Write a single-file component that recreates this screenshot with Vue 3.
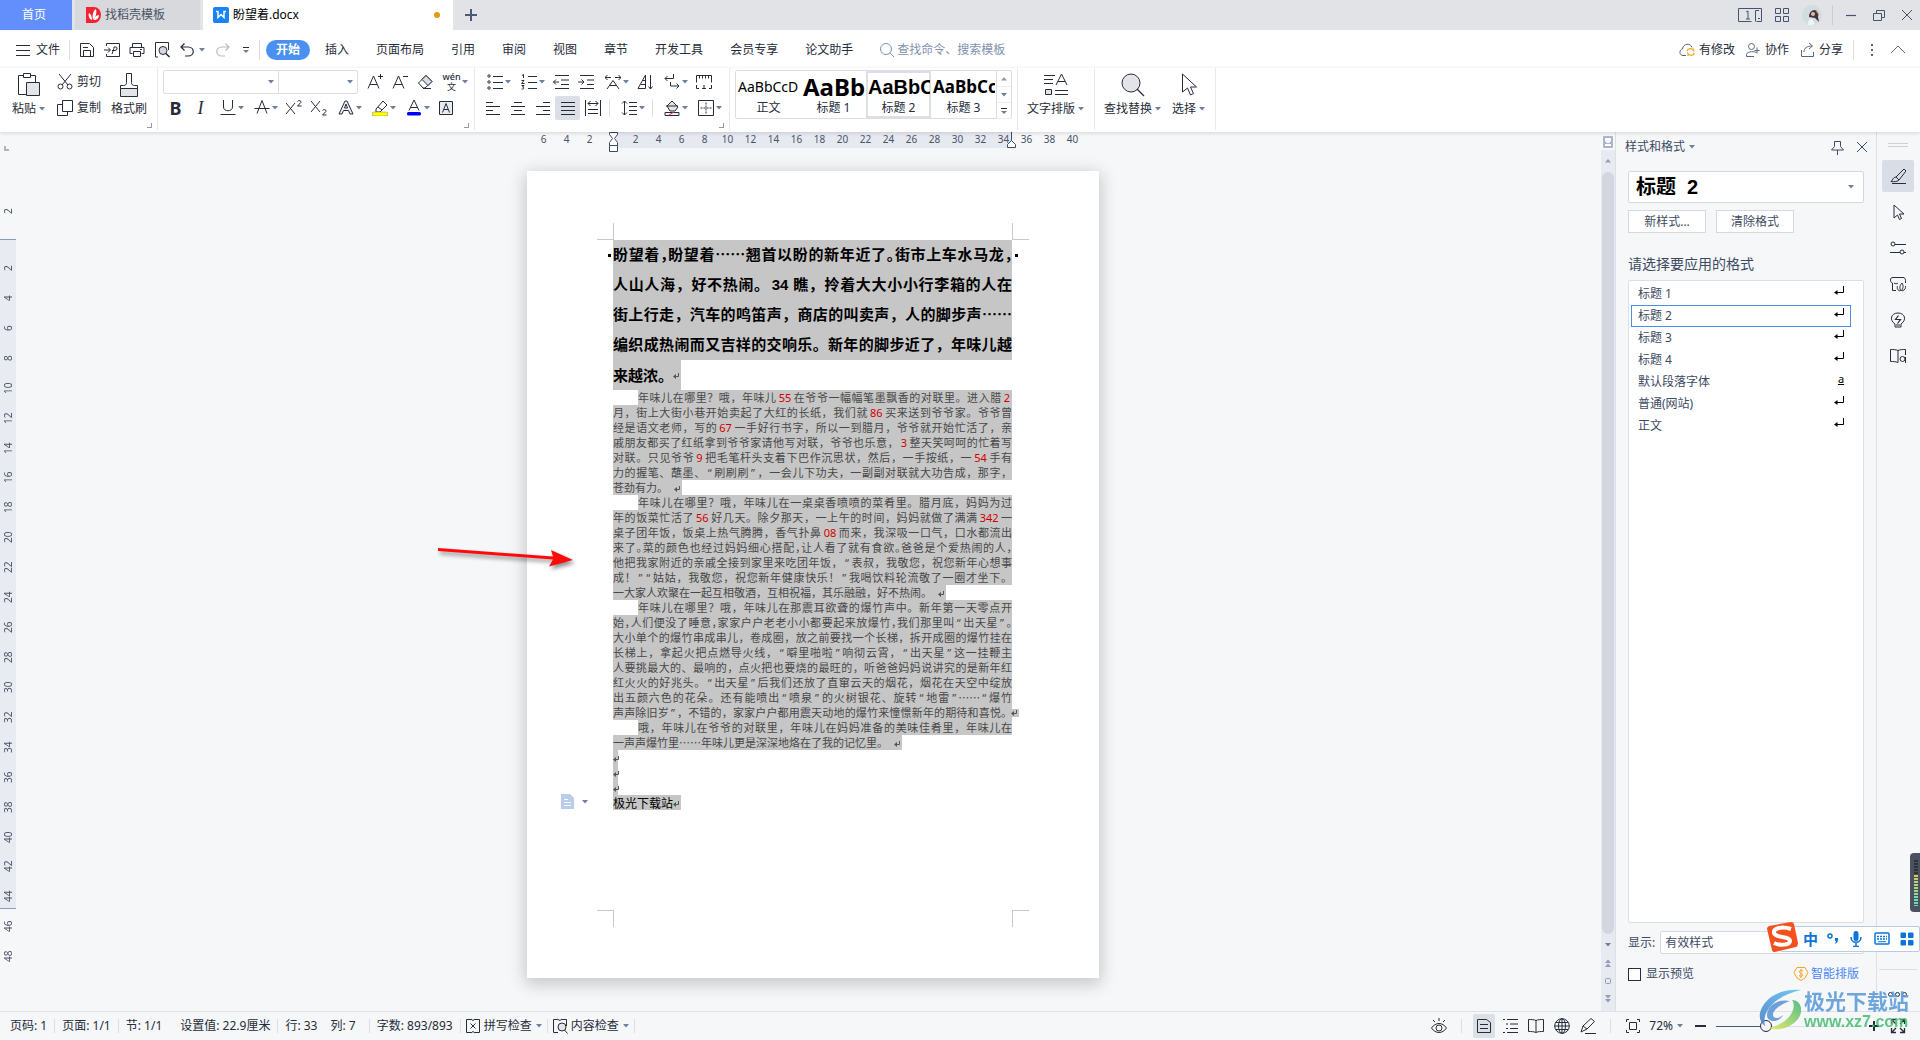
<script setup>
import { h, ref } from 'vue'

const glyphs = {
  caret: '<path d="M1 2h6L4 5.500z" fill="#6d7f9b" stroke="none"/>',
  caretUp: '<path d="M1 5.500h6L4 2z" fill="#8f9cb4" stroke="none"/>',
  more: '<path d="M1 1.500h6" /><path d="M1 4h6L4 7z" fill="#6d7f9b" stroke="none"/>',
  docer: '<path d="M0 0h8a7 8 0 0 1 0 16H0z" fill="#f5222f" stroke="none"/><path d="M7 13C6 8 7 4 10 2c1 4 0 8-3 11zM6 13C3 12 2 9 3 6c2 1 3 4 3 7zM8 13c0-2 2-5 5-5 0 3-2 5-5 5z" fill="#fff" stroke="none"/>',
  writer: '<rect width="16" height="16" rx="2" fill="#1683f8" stroke="none"/><path d="M3 4.500h2v6l3-3 3 3v-6h2" fill="none" stroke="#fff" stroke-width="1.500"/>',
  plus: '<path d="M8 2v12M2 8h12" stroke-width="2" stroke="#4a5a78"/>',
  tabs: '<path d="M13.500 13.500H.5V.5h23v13h-5M21 2.500h-3.500v11M8 4l2-1v8M8 11h4M20 10.500h2" transform="translate(0 1)"/>',
  apps: '<path d="M1.500 1.500h5v5h-5zM9.500 1.500h5v5h-5zM1.500 9.500h5v5h-5zM9.500 9.500h5v5h-5z"/>',
  min: '<path d="M3 8.500h10" stroke-width="1.200"/>',
  restore: '<path d="M2.500 6.500h8v7h-8zM5.500 6V3.500h8v7H11"/>',
  close: '<path d="M3 3l10 10M13 3L3 13"/>',
  menu: '<path d="M1 3.500h14M1 8.500h14M1 13.500h14"/>',
  save: '<path d="M1.500 1.500h9l4 4v9h-13zM4.500 14.500v-6h7v6M4 5.500h5"/>',
  pdf: '<path d="M2.500 4V1.500h13v13h-13V12M0 8h6M4 5.500L6.500 8 4 10.500M8 12c1-3 2-5 2-7h2c1.500 0 1.500 3.500-1 3.500H8"/>',
  print: '<path d="M3.500 5.500v-4h9v4M3.500 11.500h-2.500v-6h14v6h-2.500M4.500 9.500h7v5h-7zM11 7.500h2"/>',
  preview: '<path d="M4 15H1.500V.5h13V8"/><circle cx="9" cy="8.500" r="4" fill="#d5d8de"/><path d="M12 11.500l3.500 3.500" stroke-width="1.500"/>',
  undo: '<path d="M5.500 1.500L2 5l3.500 3.500M2 5h7c7 0 7 9 0 9H6" stroke-width="1.200"/>',
  redo: '<path d="M10.500 1.500L14 5l-3.500 3.500M14 5H7c-7 0-7 9 0 9h3" stroke-width="1.200" stroke="#b7bbc3"/>',
  search: '<circle cx="7" cy="7" r="5.500"/><path d="M11 11l4 4"/>',
  cloud: '<path d="M7 13.500H4c-4 0-4-6-.5-6.500C4 1 12 1 13 5.500"/><path d="M8 9c1-3 5-3 6.500-.5V6.500M15.500 11c-1 3-5 3-6.500.5V14" stroke="#f5a623" stroke-width="1.300"/>',
  collab: '<circle cx="6.500" cy="4.500" r="3"/><path d="M9 14.500H1.500v-2C2 9 11 9 11.500 11M12 5.500v6M9.500 8.500h5"/>',
  share: '<path d="M2.500 8v6.500h12V10M5 10c0-4 3-6 8-6M10 1l3.500 3L10 7"/>',
  dots: '<path d="M8 2v2M8 7v2M8 12v2" stroke-width="2"/>',
  chevron: '<path d="M1 11l7-7 7 7"/>',
  paste: '<path d="M7 2.500H1.500v19H9M13 2.500h5.500V9M6.500.5h7v4h-7z"/><path d="M9.500 9.500h13v13h-13z" fill="#e2e4e8"/>',
  cut: '<path d="M2 0l9 11M14 0L5 11"/><circle cx="3.500" cy="12.500" r="2.500"/><circle cx="12.500" cy="12.500" r="2.500"/>',
  copy: '<path d="M5.500.5h10v11h-10z"/><path d="M5 4.500H.5v11h10V12"/>',
  brush: '<path d="M9.500.5h5v9c0 2 1 3 3 3h3v3h-17v-3h3c2 0 3-1 3-3z"/><path d="M3.500 15.500h17v8h-17z" fill="#e2e4e8"/>',
  grow: '<path d="M1 14.500L6.500 2 12 14.500M3 10.500h7M13.500 0v5M11 2.500h5"/>',
  shrink: '<path d="M1 14.500L6.500 2 12 14.500M3 10.500h7M11 2.500h5"/>',
  eraser: '<path d="M1.500 9L9 1.500l6 6L8 14H6z"/><path d="M5 5.500l6 6 4-4-6-6z" fill="#d9dce1"/><path d="M6 14.500h8"/>',
  under: '<path d="M3.500 0v7c0 5 9 5 9 0V0M.5 14.500h15"/>',
  strike: '<path d="M3 13.500L8 .5l5 13M.5 8.500h15"/>',
  sup: '<path d="M0 3l9 11M9 3L0 14M11.500 1.500c1-1.500 4-1 3.500.8L11.500 6h4"/>',
  sub: '<path d="M0 1l9 11M9 1L0 12M11.500 10.500c1-1.500 4-1 3.500.8L11.500 15h4"/>',
  effect: '<path d="M1 14L7 1h2l6 13h-3l-1.500-3.500h-5L4 14zM6.500 8h3L8 4z" fill="#eceef1"/>',
  marker: '<path d="M4 9L11 1l4 4-7 7H4zM6 7l4 3"/><rect x="0" y="12" width="16" height="4" rx="2" fill="#ff0" stroke="#777" stroke-width=".5"/>',
  color: '<path d="M3 10.500L8 0l5 10.500M4.500 7.500h7"/><rect x="1" y="12" width="14" height="3.500" rx="1.500" fill="#00f" stroke="none"/>',
  shade: '<path d="M1.500 1.500h13v13h-13z" fill="#e8eaed"/><path d="M4.500 12.500L8 3.500l3.500 9M6 9.500h4"/>',
  bullets: '<circle cx="2" cy="2" r="1.200"/><circle cx="2" cy="8" r="1.200"/><circle cx="2" cy="14" r="1.200"/><path d="M6 2.500h10M6 8.500h10M6 14.500h10"/>',
  numbers: '<path d="M1 1.500L2.500.5V4M.5 6.500h2.500L.5 9.500h3M.5 11.500h2.500L1.500 13c2 0 2 2.500-1 2M7 2.500h9M7 8.500h9M7 14.500h9"/>',
  outdent: '<path d="M2 1.500h14M8 6h8M8 10.500h8M2 14.500h14M6 8H.5M3 5.500L.5 8 3 10.500"/>',
  indent: '<path d="M2 1.500h14M9 6h7M9 10.500h7M2 14.500h14M0 8h6M3.500 5.500L6 8l-2.500 2.500"/>',
  textdir: '<path d="M0 3.500h6M2.500 1L0 3.500 2.500 6M10 3.500h6M13.500 1L16 3.500 13.500 6M2 15l6-8.500 6 8.500M5 11.500h6"/>',
  sort: '<path d="M1 14.500L8.500 1v13.500zM4 10.500h4.500M6 6.500h2.500M13.500 1v14M11.500 12.500l2 2.500 2-2.500"/>',
  wrap: '<path d="M9.500 0v4.500H1M3.500 2L1 4.500 3.500 7M6.500 8v4H15M12.500 9.500L15 12l-2.500 2.500"/>',
  ruler: '<path d="M.5 8.500v-7h15v7M3.500 1.500v3M6.500 1.500v3M9.500 1.500v3M12.500 1.500v3M.5 11v3.500H3M6 14.500h4M8 11v3.500M13 14.500h2.500V11"/>',
  left: '<path d="M1 2.500h7M1 6.500h14M1 10.500h7M1 14.500h14"/>',
  center: '<path d="M4 2.500h8M1 6.500h14M4 10.500h8M1 14.500h14"/>',
  right: '<path d="M8 2.500h7M1 6.500h14M8 10.500h7M1 14.500h14"/>',
  justify: '<path d="M1 2.500h14M1 6.500h14M1 10.500h14M1 14.500h14"/>',
  distribute: '<path d="M.5 0v16M15.500 0v16M3 3.500h10M5.500 1L3 3.500 5.500 6M10.500 1L13 3.500 10.500 6M3 9.500h10M3 13.500h10"/>',
  spacing: '<path d="M3.500 1v14M1 3.500L3.500 1 6 3.500M1 12.500L3.500 15 6 12.500M8 2.500h8M8 6.500h8M8 10.500h8M8 14.500h8"/>',
  fill: '<path d="M3 6l5-5 6 6-3 4H6z" fill="#e2e4e8"/><path d="M2 6h12"/><path d="M1 12.500h14v3H1z" fill="#eef"/><path d="M5 15l5-3" stroke="#e33"/>',
  border: '<path d="M.5.500h15v15H.5z"/><path d="M8 2.500v11M2.500 8h11" stroke-dasharray="2 1"/>',
  layout: '<path d="M0 2.500h11M0 6.500h9M0 10.500h9M12 12L17.500 1 23 12M14 8.500h7M11 17.500h13M11 21.500h13"/><path d="M1.500 16.500h6v5h-6z" fill="#e2e4e8"/>',
  find: '<circle cx="10" cy="10" r="9" fill="#e2e4e8"/><path d="M16 16l7 7" stroke-width="1.300"/>',
  pointer: '<path d="M5.500 1v18l5-4 3 7 3-1.500-3-6.500h6z"/>',
  pin: '<path d="M5.500 2.500h6v5l3 3.500h-12l3-3.500zM8.500 11v5"/>',
  enter: '<path d="M10.500 1v6.500H3" stroke="#000"/><path d="M1 7.500L4.500 5v5z" fill="#000" stroke="none"/>',
  style: '<path d="M6 9L14 1l2 2-7 9zM6 9c-3 0-3 3-5 4.500 3 .5 7 0 8-1.500M2 15.500h14"/>',
  arrow: '<path d="M4 1v13l3.500-3 2 4.500 2-1-2-4.500H14z"/>',
  sliders: '<circle cx="3" cy="4" r="2"/><path d="M5 4.500h11M0 12.500h10"/><circle cx="12" cy="12" r="2"/><path d="M14 12.500h2"/>',
  shop: '<path d="M2.500 14.500V7C1 7 .5 5 .5 4c0-2 1-2.500 2.500-2.500h10c1.500 0 2.500 1 2.500 3V7M2.500 14.500H6M4 7c1.500 1 3 1 4 0"/><path d="M11 15c-2-3-1-6 1-8 2 3 1 6-1 8zM10 15c-3-1-3-3-2.500-5M12 15c3-1 4-3 3.500-5"/>',
  bulb: '<path d="M5 12C-1 8 1 1 8 1s9 7 3 11v3H5zM6 13h4"/><path d="M8.500 3.500l-3 4h5l-3 4" stroke-width="1.200"/>',
  book: '<path d="M8 2.500C6 1.500 3 1.500.5 1.500v12c3 0 5 0 7.500 1M8 2.500c2-1 5-1 7.500-1V7M8 2.500v12"/><circle cx="12.500" cy="11" r="2.500"/><path d="M15.500 9v6"/>',
  spell: '<path d="M6 1.500H1.500v13H6M10 1.500h4.500v13H10M6 1l2 1.500L10 1M6 15l2-1.500 2 1.500M5.500 5.500l5 5M10.500 5.500l-5 5"/>',
  check: '<path d="M5 1.500H1.500v13H6M10 1.500h4.500V8M5 1l3 1.500L10 1"/><circle cx="10" cy="9" r="4" fill="#e2e4e8"/><path d="M12.500 12l3 3.500"/>',
  eye: '<path d="M.5 10c4-6 11-6 15 0-4 6-11 6-15 0zM8 0v3M2 2l2 2M14 2l-2 2"/><circle cx="8" cy="10" r="3"/>',
  pageview: '<path d="M1.500 1.500h9l4 3v10h-13zM4 6.500h8M4 10.500h8"/>',
  outline: '<path d="M1 1.500h2M5 1.500h11M4 6h2M8 6h8M4 10.500h2M8 10.500h8M1 14.500h2M5 14.500h11"/>',
  read: '<path d="M8 2.500C6 1.500 3 1.500.5 1.500v12c3 0 5 0 7.500 1 2-1 4.500-1 7.500-1v-12c-2.500 0-5.500 0-7.500 1v12"/>',
  globe: '<circle cx="8" cy="8" r="7.300"/><path d="M8 .5v15M.5 8h15M2 4.500h12M2 11.500h12"/><ellipse cx="8" cy="8" rx="3.500" ry="7.300"/>',
  pen: '<path d="M1 14l2-6L11 .5l3.500 3L7 11zM3 8l4 3M5 15.500h11"/>',
  fit: '<path d="M4 1.500H1.500V4M12 1.500h2.500V4M4 14.500H1.500V12M12 14.500h2.500V12M4.500 4.500h7v7h-7z"/>',
  full: '<path d="M1.500 6V1.500H6M10 1.500h4.500V6M1.500 10v4.500H6M10 14.500h4.500V10M2 2l4 4M14 2l-4 4M2 14l4-4M14 14l-4-4" stroke-width="1.300"/>',
  dblUp: '<path d="M1 4L4 .5 7 4zM1 8l3-3.500L7 8z" fill="#8f9cb4" stroke="none"/>',
  dblDown: '<path d="M1 0h6L4 3.500zM1 4h6L4 7.500z" fill="#8f9cb4" stroke="none"/>',
  square: '<rect x="1.500" y="1.500" width="5" height="5" rx="1" stroke="#8f9cb4"/>',
  coin: '<path d="M4 1.500h8l3 5L12 12l-4 2.500L4 12 1 6.500z" stroke="#f5a623"/><path d="M10 5C7 3 4.500 6.500 8 7.500s1.500 4-2 2M8 3v9" stroke="#f5a623"/>',
  note: '<path d="M0 0h9l4 4v11H0z" fill="#b9cce9" stroke="none"/><path d="M3 5.500h4M3 8.500h7M3 11.500h7" stroke="#fff"/>',
  ret: '<path d="M5.500 1v3.500h-3" stroke="#555"/><path d="M0 4.500L3 2v5z" fill="#555" stroke="none"/>',
  mic: '<rect x="5.500" y="0" width="5" height="10" rx="2.500" fill="#0b74d8" stroke="none"/><path d="M3 6c0 7 10 7 10 0M8 11v4M5 15.500h6" stroke="#0b74d8" stroke-width="1.500"/>',
  keyboard: '<rect x="1" y="2" width="14" height="11" rx="1" stroke="#0b74d8" stroke-width="1.500"/><path d="M3 5.500h10M3 8h10" stroke="#0b74d8" stroke-dasharray="2 1" stroke-width="1.500"/><path d="M4 10.700h8" stroke="#0b74d8"/>',
  tiles: '<path d="M2 2h4.500v4.500H2zM9.500 9.500H14V14H9.500zM2 9.500h4.500V14H2zM9.500 2H14v4.500H9.500z" fill="#0b74d8" stroke="#0b74d8" stroke-linejoin="round"/>'
}

const Icon = (p) => h('svg', {
  width: p.s || 16,
  height: p.t || p.s || 16,
  viewBox: `0 0 ${p.s || 16} ${p.t || p.s || 16}`,
  fill: 'none',
  stroke: 'currentColor',
  'aria-hidden': 'true',
  innerHTML: glyphs[p.n]
})
Icon.props = ['n', 's', 't']

const menus = ['插入', '页面布局', '引用', '审阅', '视图', '章节', '开发工具', '会员专享', '论文助手']
const paraTop = [['bullets', 1], ['numbers', 1], ['outdent'], ['indent'], ['textdir', 1], ['sort'], ['wrap', 1], ['ruler']]
const aligns = ['left', 'center', 'right', 'justify', 'distribute']
const fontRow = [['under', 1], ['strike', 1], ['sup'], ['sub'], ['effect', 1], ['marker', 1], ['color', 1], ['shade']]
const gallery = [
  { text: 'AaBbCcD', name: '正文', kind: 'g0' },
  { text: 'AaBb', name: '标题 1', kind: 'g1' },
  { text: 'AaBbC', name: '标题 2', kind: 'g2' },
  { text: 'AaBbCc', name: '标题 3', kind: 'g3' }
]
const hRuler = [6, 4, 2, '', ...Array.from({ length: 20 }, (_, i) => (i + 1) * 2)]
const vRuler = Array.from({ length: 24 }, (_, i) => (i + 1) * 2)

const heading = [
  '盼望着，盼望着……翘首以盼的新年近了。街市上车水马龙，',
  '人山人海，好不热闹。34瞧，拎着大大小小行李箱的人在',
  '街上行走，汽车的鸣笛声，商店的叫卖声，人的脚步声……',
  '编织成热闹而又吉祥的交响乐。新年的脚步近了，年味儿越',
  '来越浓。'
]
const paragraphs = [
  [
    '年味儿在哪里？哦，年味儿55在爷爷一幅幅笔墨飘香的对联里。进入腊2',
    '月，街上大街小巷开始卖起了大红的长纸，我们就86买来送到爷爷家。爷爷曾',
    '经是语文老师，写的67一手好行书字，所以一到腊月，爷爷就开始忙活了，亲',
    '戚朋友都买了红纸拿到爷爷家请他写对联，爷爷也乐意，3整天笑呵呵的忙着写',
    '对联。只见爷爷9把毛笔杆头支着下巴作沉思状，然后，一手按纸，一54手有',
    '力的握笔、蘸墨、“刷刷刷”，一会儿下功夫，一副副对联就大功告成，那字，',
    '苍劲有力。'
  ],
  [
    '年味儿在哪里？哦，年味儿在一桌桌香喷喷的菜肴里。腊月底，妈妈为过',
    '年的饭菜忙活了56好几天。除夕那天，一上午的时间，妈妈就做了满满342一',
    '桌子团年饭，饭桌上热气腾腾，香气扑鼻08而来，我深吸一口气，口水都流出',
    '来了。菜的颜色也经过妈妈细心搭配，让人看了就有食欲。爸爸是个爱热闹的人，',
    '他把我家附近的亲戚全接到家里来吃团年饭，“表叔，我敬您，祝您新年心想事',
    '成！”“姑姑，我敬您，祝您新年健康快乐！”我喝饮料轮流敬了一圈才坐下。',
    '一大家人欢聚在一起互相敬酒，互相祝福，其乐融融，好不热闹。'
  ],
  [
    '年味儿在哪里？哦，年味儿在那震耳欲聋的爆竹声中。新年第一天零点开',
    '始，人们便没了睡意，家家户户老老小小都要起来放爆竹，我们那里叫“出天星”。',
    '大小单个的爆竹串成串儿，卷成圈，放之前要找一个长梯，拆开成圈的爆竹挂在',
    '长梯上，拿起火把点燃导火线，“噼里啪啦”响彻云霄，“出天星”这一挂鞭主',
    '人要挑最大的、最响的，点火把也要烧的最旺的，听爸爸妈妈说讲究的是新年红',
    '红火火的好兆头。“出天星”后我们还放了直窜云天的烟花，烟花在天空中绽放',
    '出五颜六色的花朵。还有能喷出“喷泉”的火树银花、旋转“地雷”……“爆竹',
    '声声除旧岁”，不错的，家家户户都用震天动地的爆竹来憧憬新年的期待和喜悦。'
  ],
  [
    '哦，年味儿在爷爷的对联里，年味儿在妈妈准备的美味佳肴里，年味儿在',
    '一声声爆竹里……年味儿更是深深地烙在了我的记忆里。'
  ]
]
const tightLines = /^(盼望着|来了。|始，)/
const split = (line) => line.split(/(\d+|[“”]|[，。])/).filter(Boolean).map((t) => ({
  t,
  c: /^\d/.test(t) ? 'num' : /[“”]/.test(t) ? 'quote' : /[，。]/.test(t) && tightLines.test(line) ? 'half' : ''
}))
const isShort = (lines, i) => i === lines.length - 1 && lines[i].length < 34

const styles = ['标题 1', '标题 2', '标题 3', '标题 4', '默认段落字体', '普通(网站)', '正文']
const current = ref('标题 2')
const zoom = ref(34)
const side = ['style', 'arrow', 'sliders', 'shop', 'bulb', 'book']
</script>

<template>
  <div class="app">
    <header class="titlebar">
      <button class="tab home">首页</button>
      <button class="tab docer"><Icon n="docer" />找稻壳模板</button>
      <button class="tab doc"><Icon n="writer" /><span>盼望着.docx</span><i class="unsaved"></i></button>
      <button class="add" aria-label="新建"><Icon n="plus" /></button>
      <div class="window">
        <button aria-label="标签"><Icon n="tabs" s="24" t="16" /></button>
        <button aria-label="应用"><Icon n="apps" /></button>
        <svg class="avatar" width="20" height="20" viewBox="0 0 20 20">
          <circle cx="10" cy="10" r="10" fill="#d3dde1" />
          <path d="M7 12c0-4 2-7 6-7 3 0 4 4 3 7l1 5-4-4z" fill="#403441" />
          <circle cx="11" cy="9" r="2" fill="#e6b7a9" />
          <path d="M6 20c0-5 2-7 4-6l3 5-3 1z" fill="#eef6f7" />
          <path d="M13 5l3 1v3z" fill="#d7ad5c" />
        </svg>
        <i class="bar"></i>
        <button aria-label="最小化"><Icon n="min" /></button>
        <button aria-label="还原"><Icon n="restore" /></button>
        <button aria-label="关闭"><Icon n="close" /></button>
      </div>
    </header>

    <nav class="menubar">
      <button class="file"><Icon n="menu" />文件</button>
      <i class="bar"></i>
      <div class="quick">
        <button aria-label="保存"><Icon n="save" /></button>
        <button aria-label="输出PDF"><Icon n="pdf" /></button>
        <button aria-label="打印"><Icon n="print" /></button>
        <button aria-label="预览"><Icon n="preview" /></button>
        <button class="wide" aria-label="撤销"><Icon n="undo" /><Icon n="caret" s="8" /></button>
        <button aria-label="恢复"><Icon n="redo" /></button>
      </div>
      <button class="qmore" aria-label="更多"><Icon n="more" s="8" /></button>
      <i class="bar"></i>
      <button class="pill">开始</button>
      <div class="menus"><button v-for="m in menus" :key="m">{{ m }}</button></div>
      <label class="find"><Icon n="search" /><input type="text" placeholder="查找命令、搜索模板" /></label>
      <div class="right">
        <button><Icon n="cloud" />有修改</button>
        <button><Icon n="collab" />协作</button>
        <button><Icon n="share" />分享</button>
        <i class="bar"></i>
        <button aria-label="选项"><Icon n="dots" /></button>
        <button aria-label="收起"><Icon n="chevron" /></button>
      </div>
    </nav>

    <section class="ribbon">
      <div class="group clip">
        <button class="big narrow"><Icon n="paste" s="24" /><span>粘贴<Icon n="caret" s="8" /></span></button>
        <div class="rows">
          <button class="row pair"><Icon n="cut" />剪切</button>
          <button class="row pair"><Icon n="copy" />复制</button>
        </div>
        <button class="big narrow"><Icon n="brush" s="24" /><span>格式刷</span></button>
        <i class="corner"></i>
      </div>
      <div class="group font">
        <div class="rows">
          <div class="row">
            <div class="combo">
              <div class="face"><select aria-label="字体"><option></option></select><Icon n="caret" s="8" /></div>
              <div class="size"><select aria-label="字号"><option></option></select><Icon n="caret" s="8" /></div>
            </div>
            <button class="tool" aria-label="增大字号"><Icon n="grow" /></button>
            <button class="tool" aria-label="减小字号"><Icon n="shrink" /></button>
            <button class="tool" aria-label="清除格式"><Icon n="eraser" /></button>
            <button class="tool drop"><span class="pinyin"><b>wén</b><em>文</em></span><Icon n="caret" s="8" /></button>
          </div>
          <div class="row">
            <button class="tool bold">B</button>
            <button class="tool ital">I</button>
            <button v-for="[n, d] in fontRow" :key="n" class="tool" :class="{ drop: d }" :aria-label="n"><Icon :n="n" /><Icon v-if="d" n="caret" s="8" /></button>
          </div>
        </div>
        <i class="corner"></i>
      </div>
      <div class="group para">
        <div class="rows">
          <div class="row">
            <button v-for="[n, d] in paraTop" :key="n" class="tool" :class="{ drop: d }" :aria-label="n"><Icon :n="n" /><Icon v-if="d" n="caret" s="8" /></button>
          </div>
          <div class="row">
            <button v-for="n in aligns" :key="n" class="tool" :class="{ on: n === 'justify' }" :aria-label="n"><Icon :n="n" /></button>
            <i class="bar"></i>
            <button class="tool drop" aria-label="行距"><Icon n="spacing" /><Icon n="caret" s="8" /></button>
            <i class="bar"></i>
            <button class="tool drop" aria-label="底纹"><Icon n="fill" /><Icon n="caret" s="8" /></button>
            <button class="tool drop" aria-label="边框"><Icon n="border" /><Icon n="caret" s="8" /></button>
          </div>
        </div>
        <i class="corner"></i>
      </div>
      <div class="group gal">
        <div class="gallery">
          <button v-for="g in gallery" :key="g.name" class="card" :class="[g.kind, { picked: g.name === current }]">
            <b>{{ g.text }}</b><span>{{ g.name }}</span>
          </button>
          <div class="spin">
            <button aria-label="上"><Icon n="caretUp" s="8" /></button>
            <button aria-label="下"><Icon n="caret" s="8" /></button>
            <button aria-label="全部"><Icon n="more" s="8" /></button>
          </div>
        </div>
      </div>
      <div class="group wideg"><button class="big"><Icon n="layout" s="24" /><span>文字排版<Icon n="caret" s="8" /></span></button></div>
      <div class="group wideg">
        <button class="big"><Icon n="find" s="24" /><span>查找替换<Icon n="caret" s="8" /></span></button>
        <button class="big"><Icon n="pointer" s="24" /><span>选择<Icon n="caret" s="8" /></span></button>
      </div>
    </section>

    <main class="work">
      <div class="vruler">
        <i class="ell"></i>
        <span class="before">2</span>
        <div class="vnums"><span v-for="n in vRuler" :key="n">{{ n }}</span></div>
      </div>
      <div class="stage">
        <div class="hruler">
          <span v-for="(n, i) in hRuler" :key="i">{{ n }}</span>
          <svg class="first" width="10" height="22" viewBox="0 0 10 22" fill="#fff" stroke="#3d4a66"><path d="M.5.500h8v2l-3 4 3 4v3h-8v-3l3-4-3-4zM.5 13.500h8v6h-8z" /></svg>
          <svg class="last" width="10" height="16" viewBox="0 0 10 16" fill="#fff" stroke="#3d4a66"><path d="M4.500 0v9M.5 15.500v-3l4-4 4 4v3z" /></svg>
        </div>
        <article class="page">
          <div class="crops top"><i></i><i></i></div>
          <div class="text">
            <h2>
              <span v-for="(l, i) in heading" :key="i" class="line" :class="{ short: i === 4 }"><span v-for="(s, k) in split(l)" :key="k" :class="s.c">{{ s.t }}</span><Icon v-if="i === 4" n="ret" s="8" /></span>
            </h2>
            <p v-for="(p, j) in paragraphs" :key="j">
              <span v-for="(l, i) in p" :key="i" class="line" :class="{ short: isShort(p, i), lead: i === 0 }"><span v-for="(s, k) in split(l)" :key="k" :class="s.c">{{ s.t }}</span><Icon v-if="i === p.length - 1" n="ret" s="8" :class="{ hang: !isShort(p, i) }" /></span>
            </p>
            <p v-for="n in 3" :key="'e' + n"><span class="line short blank"><Icon n="ret" s="8" /></span></p>
            <p class="sign"><span class="line short">极光下载站<Icon n="ret" s="8" /></span>
              <button class="note" aria-label="粘贴选项"><Icon n="note" /><Icon n="caret" s="8" /></button>
            </p>
          </div>
          <div class="crops bottom"><i></i><i></i></div>
          <svg class="pointer" width="150" height="40" viewBox="0 0 150 40">
            <path d="M8 7L123 15.500 121 9 143 19 119 25.500 123 18.500 8 10z" fill="#fe0a0a" />
          </svg>
        </article>
      </div>
      <div class="scroll">
        <svg width="10" height="12" viewBox="0 0 10 12"><rect width="10" height="12" rx="1" fill="#aab4cc" /><path d="M2 2h6v3l-2 2H4L2 5zM2 8h6v2H2z" fill="#fff" /></svg>
        <div class="track">
          <button class="up" aria-label="上滚"><Icon n="caretUp" s="8" /></button>
          <i class="thumb"></i>
          <button aria-label="下滚"><Icon n="caret" s="8" /></button>
          <button aria-label="上一页"><Icon n="dblUp" s="8" /></button>
          <button aria-label="对象"><Icon n="square" s="8" /></button>
          <button aria-label="下一页"><Icon n="dblDown" s="8" /></button>
        </div>
      </div>
      <aside class="panel">
        <div class="phead"><span>样式和格式</span><Icon n="caret" s="8" /><button class="pin" aria-label="固定"><Icon n="pin" /></button><button aria-label="关闭窗格"><Icon n="close" /></button></div>
        <div class="pick big2"><select v-model="current" aria-label="当前样式"><option v-for="s in styles" :key="s" :value="s">{{ s.replace(' ', '\u00a0\u00a0') }}</option></select><Icon n="caret" s="8" /></div>
        <div class="btns"><button>新样式...</button><button>清除格式</button></div>
        <h3>请选择要应用的格式</h3>
        <div class="list">
          <button v-for="s in styles" :key="s" :class="{ picked: s === current }" @click="current = s">
            <span>{{ s }}</span><u v-if="s === '默认段落字体'">a</u><Icon v-else n="enter" s="12" />
          </button>
        </div>
        <div class="show"><label for="show">显示:</label><div class="pick"><select id="show"><option>有效样式</option></select></div></div>
        <div class="opts"><input id="pv" type="checkbox" /><label for="pv">显示预览</label><a href="#"><Icon n="coin" />智能排版</a></div>
      </aside>
      <aside class="side">
        <i class="grip"></i>
        <button v-for="(n, i) in side" :key="n" :class="{ on: i === 0 }" :aria-label="n"><Icon :n="n" /></button>
        <div class="rest"><i></i><i></i><i></i></div>
      </aside>
    </main>

    <footer class="status">
      <span>页码: 1</span><i class="bar"></i><span>页面: 1/1</span><i class="bar"></i><span>节: 1/1</span><span class="gap">设置值: 22.9厘米</span><i class="bar"></i><span>行: 33</span><span class="col">列: 7</span><i class="bar"></i><span>字数: 893/893</span><i class="bar"></i>
      <button><Icon n="spell" />拼写检查<Icon n="caret" s="8" /></button><i class="bar"></i>
      <button><Icon n="check" />内容检查<Icon n="caret" s="8" /></button><i class="bar"></i>
      <div class="views">
        <button aria-label="护眼"><Icon n="eye" /></button>
        <i class="bar"></i>
        <button class="on" aria-label="页面视图"><Icon n="pageview" /></button>
        <button aria-label="大纲"><Icon n="outline" /></button>
        <button aria-label="阅读"><Icon n="read" /></button>
        <button aria-label="Web"><Icon n="globe" /></button>
        <button aria-label="写作"><Icon n="pen" /></button>
        <i class="bar"></i>
      </div>
      <div class="zoomer">
        <Icon n="fit" /><span class="pct">72%<Icon n="caret" s="8" /></span>
        <button class="minus" aria-label="缩小"><i></i></button>
        <input v-model="zoom" type="range" min="0" max="100" aria-label="缩放" />
        <button class="plusb" aria-label="放大"><i></i></button>
        <button aria-label="全屏"><Icon n="full" /></button>
      </div>
    </footer>

    <div class="meter"><i></i></div>

    <div class="brand">
      <svg width="44" height="42" viewBox="0 0 44 42">
        <defs>
          <linearGradient id="bl" x1="0" y1="1" x2="1" y2="0"><stop offset="0" stop-color="#4a7fc6" /><stop offset="1" stop-color="#5cc4f3" /></linearGradient>
          <linearGradient id="gr" x1="0" y1="1" x2="1" y2="0"><stop offset="0" stop-color="#e6e85a" /><stop offset="1" stop-color="#3fb878" /></linearGradient>
        </defs>
        <path d="M42 1C20-1 4 10 1 24c-1 6 1 10 5 13C2 22 18 6 42 1z" fill="url(#bl)" />
        <path d="M10 39c14 5 34-6 32-20-1-5-4-8-9-8 6 9-4 24-23 28z" fill="url(#gr)" />
        <path d="M31 12C18 9 8 18 8 26c0 8 12 8 16 0-4 4-10 4-10 0 0-5 8-11 17-14z" fill="#5b95d6" />
      </svg>
      <div><strong>极光下载站</strong><em>www.xz7.com</em></div>
    </div>

    <div class="ime">
      <svg class="sogou" width="32" height="32" viewBox="0 0 32 32">
        <path d="M3 5L25 1q2 0 3 2l4 19q0 3-2 4L9 31q-3 0-3-2L1 8q0-2 2-3z" fill="#f4511e" />
        <path d="M25 8C16 5 7 7 8 12s16 3 16 8c0 4-10 5-16 2" fill="none" stroke="#fff" stroke-width="4" />
      </svg>
      <b>中</b>
      <svg width="12" height="14" viewBox="0 0 12 14"><circle cx="3" cy="4" r="2" fill="none" stroke="#0b74d8" stroke-width="1.500" /><path d="M8 6h3c0 4-1 5-3 6l1-3H8z" fill="#0b74d8" /></svg>
      <Icon n="mic" /><Icon n="keyboard" /><Icon n="tiles" />
    </div>
  </div>
</template>

<style>
html, body { background: #f5f7f9; }
</style>

<style scoped>
.app { position: relative; display: flex; flex-direction: column; min-height: 100vh; font: 12px/16px "Noto Sans", "Noto Sans CJK SC", sans-serif; color: #262c3a; background: #f5f7f9; overflow: hidden; }
.app * { box-sizing: border-box; }
button, select, input { font: inherit; color: inherit; }
button { display: flex; align-items: center; justify-content: center; border: 0; padding: 0; margin: 0; background: none; white-space: nowrap; }
svg { display: block; flex: none; }
select { appearance: none; border: 0; background: none; outline: 0; padding: 0; min-width: 0; flex: 1; }
.bar { flex: none; width: 1px; height: 20px; background: #dcdfe4; }

.titlebar { display: flex; height: 30px; background: #e1e3e7; flex: none; }
.home { width: 72px; margin-right: 3px; padding-right: 4px; background: #628ffb; color: #fff; }
.docer { width: 125px; margin-right: 3px; padding-left: 11px; gap: 3px; justify-content: flex-start; background: #d7d9dc; color: #4a5264; }
.doc { width: 250px; padding: 0 13px 0 10px; gap: 4px; background: #fff; color: #000; }
.doc span { flex: 1; text-align: left; }
.unsaved { width: 6px; height: 6px; border-radius: 3px; background: #e59a0a; }
.add { width: 36px; }
.window { display: flex; align-items: center; margin-left: auto; padding-right: 5px; gap: 12px; color: #44546f; }
.window .bar { margin: 0 -2px; background: #c9ccd2; }

.menubar { display: flex; align-items: center; height: 38px; padding-top: 1px; background: #fff; flex: none; }
.file { gap: 5px; margin: 0 9px 0 15px; }
.quick { display: flex; gap: 9px; padding: 0 5px 0 9px; }
.quick .wide { gap: 3px; }
.qmore { width: 20px; margin-right: 3px; }
.pill { width: 44px; height: 20px; margin: 0 15px 0 6px; border-radius: 10px; background: #4a90f0; color: #fff; font-weight: 700; }
.menus { display: flex; gap: 27px; }
.find { display: flex; align-items: center; gap: 2px; margin-left: 26px; color: #8391ad; }
.find input { width: 120px; border: 0; padding: 0; outline: 0; background: none; }
.find input::placeholder { color: #8391ad; opacity: 1; }
.right { display: flex; align-items: center; gap: 10px; margin-left: auto; padding-right: 14px; }
.right button { gap: 4px; }
.right button svg { color: #5b6579; }

.ribbon { position: relative; z-index: 2; display: flex; height: 64px; background: #fff; box-shadow: 0 1px 4px rgba(0, 0, 0, .14); flex: none; }
.group { position: relative; display: flex; height: 62px; padding: 1px 5px 0; border-right: 1px solid #e8eaed; flex: none; }
.clip { gap: 6px; padding: 1px 9px 0 10px; }
.font { padding-right: 3px; }
.para { padding-right: 4px; }
.corner { position: absolute; right: 5px; bottom: 2px; width: 5px; height: 5px; border: solid #8f9cb4; border-width: 0 1px 1px 0; }
.big { flex-direction: column; justify-content: flex-start; gap: 2px; padding-top: 4px; height: 52px; }
.big span { display: flex; align-items: center; gap: 2px; height: 20px; }
.narrow { width: 38px; }
.rows { display: flex; flex-direction: column; }
.row { display: flex; align-items: center; height: 26px; }
.pair { gap: 4px; width: 50px; }
.combo { display: flex; width: 195px; height: 24px; margin-right: 4px; border: 1px solid #dcdee2; border-radius: 2px; }
.combo div { display: flex; align-items: center; padding-right: 3px; }
.face { width: 115px; border-right: 1px solid #dcdee2; }
.size { flex: 1; }
.tool { width: 25px; height: 24px; }
.drop { width: 34px; gap: 1px; padding-left: 4px; }
.bold { font: 700 18px/20px "Noto Sans", sans-serif; }
.ital { font: italic 18px/20px "Liberation Serif", serif; }
.on { background: #dbe0e7; border-radius: 2px; }
.pinyin { display: flex; flex-direction: column; align-items: center; width: 17px; }
.pinyin b { font: 500 9px/10px "Noto Sans", sans-serif; }
.pinyin em { font: 9px/10px "Noto Sans CJK SC", sans-serif; }
.row .bar { margin: 0 4px; height: 18px; }
.gallery { display: flex; width: 277px; height: 49px; margin-top: 1px; border: 1px solid #dcdee2; border-radius: 2px; }
.card { flex-direction: column; justify-content: flex-start; width: 65px; height: 47px; align-items: stretch; border: 1px solid transparent; overflow: hidden; }
.card b { height: 28px; padding-left: 1px; line-height: 30px; overflow: hidden; text-align: left; color: #000; }
.card span { height: 18px; line-height: 18px; text-align: center; }
.card.picked { border-color: #dcdfe6; box-shadow: 0 0 0 1px #dcdfe6 inset; }
.g0 b { font-weight: 400; font-size: 14px; }
.g1 b { font-size: 24px; }
.g2 b { font-family: "Liberation Sans", sans-serif; font-size: 20px; }
.g3 b { font-size: 17px; }
.spin { flex: 1; border-left: 1px solid #dcdee2; }
.spin button { width: 100%; height: 16px; border-bottom: 1px solid #eceef1; }
.wideg { padding: 1px 9px 0; gap: 10px; }

.work { display: flex; flex: 1; }
.vruler { width: 16px; padding-top: 14px; display: flex; flex-direction: column; font: 10px/16px "Noto Sans", sans-serif; color: #4a5468; background: linear-gradient(#f5f7f9 107px, #8b9cba 107px, #8b9cba 108px, #e8ebf1 108px, #e8ebf1 776px, #8b9cba 776px, #8b9cba 777px, #f5f7f9 777px); }
.ell { width: 5px; height: 5px; margin-left: 4px; border: solid #b0b4be; border-width: 0 0 2px 2px; }
.vruler span { writing-mode: vertical-rl; transform: rotate(180deg); flex: 1; text-align: center; width: 16px; }
.vruler .before { flex: none; height: 16px; margin-top: 52px; }
.vnums { display: flex; flex-direction: column; height: 718px; margin-top: 34px; }
.stage { flex: 1; display: flex; flex-direction: column; align-items: center; padding-left: 9px; }
.hruler { position: relative; display: flex; width: 572px; height: 16px; padding-left: 5px; font: 10px/14px "Noto Sans", sans-serif; color: #4a5468; background: linear-gradient(90deg, #f5f7f9 86px, #e6e9f0 86px, #e6e9f0 485px, #f5f7f9 485px); }
.hruler span { width: 23px; text-align: center; }
.first { position: absolute; left: 82px; top: 0; }
.last { position: absolute; left: 480px; top: 0; }
.page { position: relative; display: flex; flex-direction: column; width: 572px; min-height: 807px; margin: 23px 0 30px; padding: 52px 70px 51px; background: #fff; box-shadow: 0 4px 16px 2px rgba(0, 0, 0, .2); }
.crops { display: flex; justify-content: space-between; }
.crops i { width: 17px; height: 17px; border: 0 solid #c8c8c8; border-bottom-width: 1px; border-right-width: 1px; }
.crops i + i { border-right-width: 0; border-left-width: 1px; }
.bottom { margin-top: auto; }
.bottom i { border-bottom-width: 0; border-top-width: 1px; }
.text { margin: 0 17px 0 16px; font-family: "Noto Sans CJK SC", sans-serif; }
h2, p { position: relative; margin: 0; }
h2 { font-size: 15px; line-height: 28px; color: #000; font-weight: 700; }
h2::before, h2::after { content: ""; position: absolute; top: 14px; left: -5px; width: 3px; height: 3px; background: #000; }
h2::after { left: auto; right: -6px; }
.line { display: block; position: relative; background: #c6c6c6; text-align: justify; text-align-last: justify; white-space: nowrap; }
h2 .line { height: 30px; }
p .line { font-size: 11px; line-height: 15px; height: 15px; color: #484848; }
.lead { margin-left: 25px; }
.short { display: flex; align-items: center; width: fit-content; text-align-last: left; }
.short svg { margin: 2px 0 0 6px; }
h2 .short svg { margin-left: 0; }
.blank svg, .sign .short svg { margin: 2px 0 0; }
.blank { width: 5px; }
.hang { position: absolute; left: 398px; top: 4px; background: #c6c6c6; }
.num, .quote { font-family: "Noto Sans", sans-serif; line-height: 1; }
.num, .quote { padding: 0 2px; }
p .num { color: #d00000; }
h2 .num { font-family: "Liberation Sans", sans-serif; padding: 0 4px 0 2px; }
.half { font-feature-settings: "halt"; }
.sign .short { font-size: 12px; color: #000; }
.note { position: absolute; left: -52px; top: -1px; gap: 4px; }
.pointer { position: absolute; left: -97px; top: 370px; filter: drop-shadow(2px 3px 2px rgba(0, 0, 0, .45)); }

.scroll { display: flex; flex-direction: column; align-items: center; width: 14px; padding-top: 4px; }
.track { display: flex; flex-direction: column; align-items: center; flex: 1; width: 14px; margin-top: 2px; padding-bottom: 3px; background: #e8eaf1; }
.track button { height: 18px; width: 14px; }
.track .up { height: 22px; }
.thumb { flex: 1; width: 12px; margin-bottom: 2px; border-radius: 6px; background: #d3d6df; }

.panel { display: flex; flex-direction: column; width: 261px; padding: 0 12px 27px; border-left: 1px solid #dcdfe4; color: #3d4a63; }
.phead { display: flex; align-items: center; height: 30px; margin: 0 -6px 9px -3px; gap: 3px; }
.pin { margin: 0 6px 0 auto; }
.pick { display: flex; align-items: center; flex: 1; height: 23px; padding: 0 8px 0 4px; border: 1px solid #d5d8de; border-radius: 2px; background: #fff; }
.big2 { flex: none; height: 32px; padding-left: 7px; }
.big2 select { font: 700 20px/28px "Liberation Sans", "Noto Sans CJK SC", sans-serif; color: #000; }
.btns { display: flex; gap: 10px; margin-top: 7px; }
.btns button { width: 78px; height: 23px; border: 1px solid #d5d8de; background: #fff; }
h3 { margin: 21px 0 6px; font-size: 14px; line-height: 20px; font-weight: 400; }
.list { flex: 1; padding: 2px 12px 2px 2px; border: 1px solid #dcdfe4; border-radius: 2px; background: #fff; }
.list button { justify-content: space-between; width: 100%; height: 22px; padding: 0 5px 0 6px; border: 1px solid transparent; }
.list .picked { border-color: #4a90e8; }
.list svg { margin-bottom: 6px; }
.list u { width: 8px; margin-bottom: 6px; color: #000; font: 11px/12px "Noto Sans", sans-serif; }
.show { display: flex; align-items: center; gap: 5px; margin: 8px 0 10px; }
.opts { display: flex; align-items: center; height: 20px; gap: 5px; }
.opts input { appearance: none; width: 13px; height: 13px; margin: 0; border: 1px solid #262c3a; background: #fff; }
.opts a { display: flex; gap: 2px; margin: 0 5px 0 auto; color: #4a86f5; text-decoration: none; }

.side { display: flex; flex-direction: column; align-items: center; width: 44px; padding: 11px 2px 14px 0; border-left: 1px solid #dcdfe4; }
.grip { width: 20px; height: 4px; margin-bottom: 13px; border: solid #cdd0d6; border-width: 1px 0; }
.side button { width: 32px; height: 32px; margin-bottom: 4px; }
.side .on { background: #d9dee6; }
.rest { display: flex; justify-content: center; gap: 2px; width: 38px; margin-top: auto; padding-top: 22px; border-top: 1px solid #dcdfe4; }
.rest i { width: 5px; height: 5px; border: 1px solid #262c3a; border-radius: 3px; }

.status { display: flex; align-items: center; height: 29px; padding-left: 10px; gap: 9px; border-top: 1px solid #dfe1e6; flex: none; }
.status .bar { height: 14px; margin: 0 -2px; }
.status .gap { margin-left: 9px; }
.status .col { margin: 0 6px 0 4px; }
.status > button { gap: 3px; margin: 0 -3px; }
.views { display: flex; align-items: center; gap: 4px; margin-left: auto; }
.views button { width: 22px; height: 24px; }
.views .bar { margin: 0 7px; }
.zoomer { display: flex; align-items: center; gap: 8px; margin: 0 14px 0 -2px; }
.zoomer button { width: 16px; height: 16px; }
.pct { display: flex; align-items: center; gap: 3px; }
.minus i, .plusb i { width: 11px; height: 2px; background: #262c3a; }
.plusb i { height: 10px; background: linear-gradient(#262c3a, #262c3a) 50% 50% / 10px 2px no-repeat, linear-gradient(#262c3a, #262c3a) 50% 50% / 2px 10px no-repeat; }
.zoomer input { appearance: none; width: 142px; height: 14px; margin: 0; background: linear-gradient(90deg, #4a5a78 48px, #dcdfe4 48px) 0 50% / 100% 1px no-repeat; }
.zoomer input::-webkit-slider-thumb { appearance: none; width: 12px; height: 12px; border: 1px solid #262c3a; border-radius: 6px; background: #f5f5f7; }

.meter { position: absolute; right: 0; bottom: 128px; width: 10px; height: 59px; padding: 7px 2px 6px 4px; border-radius: 4px 0 0 4px; background: #4c5160; }
.meter i { display: block; height: 46px; background: repeating-linear-gradient(transparent 0 2px, #4c5160 2px 3px), linear-gradient(#2e323c 14px, #d9c85c 15px, #a8d97c 28px, #55dcc4); }
.brand { position: absolute; right: 11px; bottom: 9px; z-index: 3; display: flex; gap: 1px; opacity: .88; }
.brand strong { display: block; font: 700 21px/23px "Noto Sans CJK SC", sans-serif; color: #5c9bd9; }
.brand em { display: block; font: 700 16px/19px "Liberation Sans", sans-serif; color: #4cbf74; }
.ime { position: absolute; right: 0; bottom: 88px; z-index: 3; display: flex; align-items: center; justify-content: space-between; width: 140px; height: 26px; padding: 0 4px 0 22px; border: 1px solid #b8cbe6; border-radius: 2px; background: #fff; }
.ime b { font-size: 15px; color: #0b74d8; }
.sogou { position: absolute; left: -15px; top: -6px; }
</style>
